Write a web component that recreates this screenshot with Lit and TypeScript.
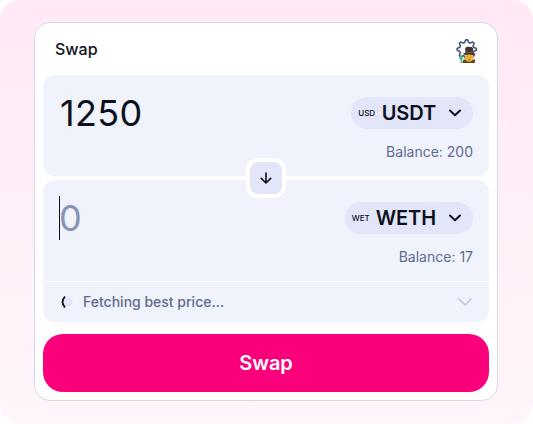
import { LitElement, html, css, svg } from "lit";
import { customElement, property } from "lit/decorators.js";

@customElement("token-field")
class TokenField extends LitElement {
  @property() amount = "";
  @property() placeholder = "0";
  @property() symbol = "";
  @property() balance = "";

  static styles = css`
    :host { display: block; height: 101px; box-sizing: border-box; padding: 16px 16px 0 16px; }
    .row { display: flex; justify-content: space-between; align-items: center; height: 44px; }
    .amount { font-size: 36px; line-height: 44px; color: #0d111c; letter-spacing: 0.3px; text-indent: 1px; }
    .empty { color: #8792b5; border-left: 1px solid #0d111c; text-indent: -1px; }
    .token { display: flex; align-items: center; height: 32px; border-radius: 16px; background: #e3e5f9; padding: 0 12px 0 7px; box-sizing: border-box; }
    .logo { font-size: 8px; font-weight: 500; color: #0d111c; width: 18px; text-align: center; margin-right: 6px; white-space: nowrap; }
    .name { font-size: 20px; font-weight: 600; line-height: 32px; letter-spacing: -0.1px; color: #0d111c; }
    .chevron { width: 12px; height: 8px; margin-left: 13px; fill: none; stroke: #0d111c; stroke-width: 2; }
    .balance { font-size: 14px; line-height: 20px; margin-top: 7px; text-align: right; color: #606b8f; }
  `;

  render() {
    return html`
      <div class="row">
        ${this.amount
          ? html`<span class="amount">${this.amount}</span>`
          : html`<span class="amount empty">${this.placeholder}</span>`}
        <div class="token">
          <span class="logo">${this.symbol.slice(0, 3)}</span>
          <span class="name">${this.symbol}</span>
          <svg class="chevron" viewBox="0 0 12 8"><path d="M1 1.5 6 6.3 11 1.5" stroke-linejoin="round" stroke-linecap="round" /></svg>
        </div>
      </div>
      <div class="balance">Balance: ${this.balance}</div>
    `;
  }
}

const wizard = svg`
  <path d="M6.2 25 7.5 21.5h11.5L18.8 25z" fill="#5b4526" />
  <path d="M5.3 19v6" stroke="#8a6a44" stroke-width="1" />
  <path d="M3.2 20 4.8 17 6.9 19.3 6.3 22.6H4.1z" fill="#3cc476" />
  <ellipse cx="13.2" cy="19.7" rx="4.4" ry="4" fill="#f3b52f" />
  <path d="M11.1 19h1M14.4 19h1M12 21.7h2.5" stroke="#8a571c" stroke-width=".8" />
  <path d="M6.6 16 9.3 14.4 9.2 10 11 8.8 15.8 9 17.2 10.2 16.9 14.4 20 16.2 16.8 17 13.3 16.4 9.5 17z" fill="#43352b" />
  <path d="M9.5 14q3.7 1.3 7.3 0" fill="none" stroke="#80603f" />
`;

@customElement("app-root")
class AppRoot extends LitElement {
  static styles = css`
    :host { display: flex; box-sizing: border-box; width: 533px; height: 424px; padding: 22px 35px 23px 34px; border-radius: 20px; background: linear-gradient(#ffe9f6, #fff5fa); font-family: Inter, sans-serif; }
    .card { flex: 1; box-sizing: border-box; border: 1px solid #d5d9e6; border-radius: 16px; background: #fff; padding: 0 8px; }
    .head { display: flex; justify-content: space-between; align-items: center; height: 52px; padding: 0 11px 0 12px; }
    .title { font-size: 16px; font-weight: 500; line-height: 24px; color: #0d111c; }
    .settings { width: 22px; height: 26px; margin-top: 3px; display: block; }
    .input { background: #f0f3fb; border-radius: 12px; }
    .output { background: #f0f3fb; border-radius: 12px 12px 0 0; margin-top: 4px; }
    .wrap { position: relative; }
    .switch { position: absolute; left: 203px; top: 83px; width: 40px; height: 40px; box-sizing: border-box; border: 4px solid #fff; border-radius: 12px; background: #e3e5f9; display: grid; place-items: center; }
    .switch svg { width: 12px; height: 12px; fill: none; stroke: #0d111c; stroke-width: 1.6; stroke-linecap: round; stroke-linejoin: round; }
    .status { display: flex; align-items: center; height: 40px; margin-top: 1px; background: #f0f3fb; border-radius: 0 0 12px 12px; padding: 0 16px 1px 17px; box-sizing: border-box; }
    .spinner { width: 14px; height: 14px; margin-right: 9px; }
    .message { flex: 1; font-size: 14px; font-weight: 500; line-height: 19px; color: #606b8f; }
    .more { width: 16px; height: 10px; fill: none; stroke: #c2c8e3; stroke-width: 1.7; stroke-linecap: round; stroke-linejoin: round; }
    .submit { display: block; width: 100%; height: 58px; margin-top: 12px; border: 0; border-radius: 20px; background: #fb007b; color: #fff; font: 600 20px Inter, sans-serif; padding: 0; }
  `;

  render() {
    const teeth = Array.from({ length: 32 }, (_, i) => {
      const r = i % 4 < 2 ? 9.6 : 7.2;
      const a = ((i - 0.5) * Math.PI) / 16 - Math.PI / 2;
      return `${(10.7 + r * Math.cos(a)).toFixed(2)},${(11.4 + r * Math.sin(a)).toFixed(2)}`;
    }).join(" ");
    return html`
      <div class="card">
        <div class="head">
          <span class="title">Swap</span>
          <svg class="settings" viewBox="0 0 22 26">
            <polygon points=${teeth} fill="none" stroke="#46547e" stroke-width="1.6" stroke-linejoin="round" />
            ${wizard}
          </svg>
        </div>
        <div class="wrap">
          <token-field class="input" amount="1250" symbol="USDT" balance="200"></token-field>
          <token-field class="output" symbol="WETH" balance="17"></token-field>
          <div class="switch">
            <svg viewBox="0 0 12 12"><path d="M6 1V11M1.3 6.4 6 11 10.7 6.4" /></svg>
          </div>
        </div>
        <div class="status">
          <svg class="spinner" viewBox="0 0 14 14">
            <circle cx="8" cy="7" r="4.5" fill="#e3e5f9" />
            <path d="M5 1.5Q0 7 5 12.5" fill="none" stroke="#0d111c" stroke-width="1.8" />
          </svg>
          <span class="message">Fetching best price...</span>
          <svg class="more" viewBox="0 0 16 10"><path d="M2 2 8 8 14 2" /></svg>
        </div>
        <button class="submit">Swap</button>
      </div>
    `;
  }
}
